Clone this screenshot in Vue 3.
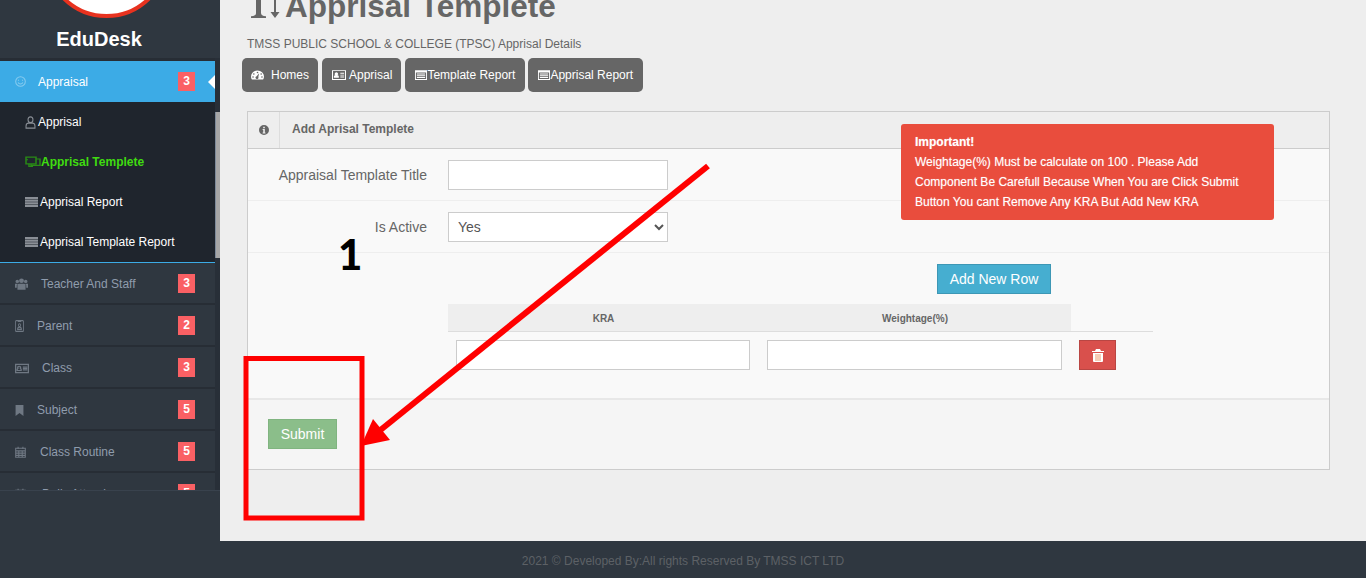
<template>
  <div class="page">
    <aside class="sidebar">
      <div class="brand">
        <div class="brand__logo"></div>
        <div class="brand__name">EduDesk</div>
      </div>
      <div class="sidebar__body">
        <nav class="menu">
          <a class="menu__item menu__item--active">
            <span class="menu__icon" :style="{ width: '23px' }">
              <svg class="ico ico--line" viewBox="0 0 16 16" width="11" height="11"><path :d="icons.smile" /></svg>
            </span>
            <span>Appraisal</span>
            <span class="badge">3</span>
            <span class="menu__caret"></span>
          </a>
          <div class="submenu">
            <a
              v-for="sub in subItems"
              :key="sub.label"
              class="submenu__item"
              :class="{ 'submenu__item--current': sub.current }"
            >
              <span class="menu__icon" :style="{ width: sub.iconBox + 'px' }">
                <svg
                  class="ico"
                  :class="sub.line ? 'ico--line' : 'ico--fill'"
                  viewBox="0 0 16 16"
                  :width="sub.w"
                  :height="sub.h"
                  preserveAspectRatio="none"
                ><path :d="icons[sub.icon]" /></svg>
              </span>
              <span>{{ sub.label }}</span>
            </a>
          </div>
          <a v-for="item in items" :key="item.label" class="menu__item">
            <span class="menu__icon" :style="{ width: item.iconBox + 'px' }">
              <svg
                class="ico"
                :class="item.line ? 'ico--line' : 'ico--fill'"
                viewBox="0 0 16 16"
                :width="item.w"
                :height="item.h"
                preserveAspectRatio="none"
              ><path :d="icons[item.icon]" /></svg>
            </span>
            <span>{{ item.label }}</span>
            <span class="badge">{{ item.badge }}</span>
          </a>
        </nav>
        <div class="scrolltrack"><div class="scrolltrack__thumb"></div></div>
      </div>
      <div class="sidebar__foot"></div>
    </aside>

    <div class="main">
      <div class="content">
        <h1 class="title">
          <svg class="title__icon" viewBox="0 0 32 24" width="32" height="24">
            <path d="M7 0h5v19c0 2 1.500 3 5 3.200V24H2v-1.800c3.500-.2 5-1.200 5-3.200z" />
            <path d="M25 4h2v14h3.500L26 24l-4.500-6H25z" />
          </svg>
          <span>Apprisal Templete</span>
        </h1>
        <p class="subtitle">TMSS PUBLIC SCHOOL &amp; COLLEGE (TPSC) Apprisal Details</p>
        <div class="quick">
          <a v-for="btn in quickLinks" :key="btn.label" class="quick__btn">
            <svg class="ico ico--white" :style="{ marginRight: btn.gap + 'px' }" viewBox="0 0 16 16" :width="btn.w" height="12" preserveAspectRatio="none"><path :d="icons[btn.icon]" /></svg>
            <span>{{ btn.label }}</span>
          </a>
        </div>

        <section class="panel">
          <header class="panel__head">
            <span class="panel__icon">
              <svg class="ico ico--info" viewBox="0 0 16 16" width="10" height="10"><path :d="icons.info" /></svg>
            </span>
            <span class="panel__title">Add Aprisal Templete</span>
          </header>
          <div class="form-row">
            <label class="form-row__label">Appraisal Template Title</label>
            <input class="control" type="text" />
          </div>
          <div class="form-row">
            <label class="form-row__label">Is Active</label>
            <select class="control control--select">
              <option>Yes</option>
              <option>No</option>
            </select>
          </div>
          <div class="kra">
            <div class="kra__actions">
              <button class="btn btn--info" type="button">Add New Row</button>
            </div>
            <div class="kra__table">
              <div class="kra__th">KRA</div>
              <div class="kra__th">Weightage(%)</div>
              <div class="kra__blank"></div>
              <div class="kra__td"><input class="control control--full" type="text" /></div>
              <div class="kra__td"><input class="control control--full" type="text" /></div>
              <div class="kra__td kra__td--last">
                <button class="btn btn--danger" type="button" aria-label="Remove">
                  <svg viewBox="0 0 12 13" width="12" height="13">
                    <path fill="#fff" d="M4 0h4l1 2h3v1H0V2h3zM1 4h10v8a1 1 0 0 1-1 1H2a1 1 0 0 1-1-1z" />
                    <path fill="#f6cdb6" d="M3 5h6v7H3z" />
                  </svg>
                </button>
              </div>
            </div>
          </div>
          <div class="panel__foot">
            <button class="btn btn--success" type="button">Submit</button>
          </div>
        </section>
      </div>
      <footer class="footer">2021 © Developed By:All rights Reserved By TMSS ICT LTD</footer>
    </div>

    <div class="notice">
      <strong>Important!</strong><br />
      Weightage(%) Must be calculate on 100 . Please Add<br />
      Component Be Carefull Because When You are Click Submit<br />
      Button You cant Remove Any KRA But Add New KRA
    </div>

    <div class="step">1</div>

    <svg class="markup" viewBox="0 0 1366 578" width="1366" height="578">
      <rect x="246" y="358.500" width="116" height="159.500" fill="none" stroke="#ff0000" stroke-width="5" />
      <path d="M708 166 L378 432" stroke="#ff0000" stroke-width="6" fill="none" />
      <path d="M361 446 L373 419 L390 440 Z" fill="#ff0000" />
    </svg>
  </div>
</template>

<script setup>
const icons = {
  smile: 'M8 1a7 7 0 1 0 0 14a7 7 0 1 0 0-14z M5 5.500v1.500 M11 5.500v1.500 M4.500 9.500c1.500 3 5.500 3 7 0',
  user: 'M8 1a3.600 3.600 0 1 0 0 7.200a3.600 3.600 0 1 0 0-7.200z M1.500 15v-2.500c0-2 1.500-3.600 3.500-3.600h6c2 0 3.500 1.600 3.500 3.600V15z',
  screens: 'M1 1.500h10v9H1z M11 4h4v8.500H6v-2 M4 10.500v3.500h4 M1 5h2',
  list: 'M0 0h16v3.500H0z M0 4.200h16v3.500H0z M0 8.400h16v3.500H0z M0 12.600h16V16H0z',
  users: 'M8 .5a3 3 0 1 0 0 6a3 3 0 1 0 0-6z M2.800 2.300a2.200 2.200 0 1 0 0 4.400a2.200 2.200 0 1 0 0-4.400z M13.200 2.300a2.200 2.200 0 1 0 0 4.400a2.200 2.200 0 1 0 0-4.400z M4.500 7.500h7c1 0 1.500 1 1.500 2v6H3v-6c0-1 .5-2 1.500-2z M0 7.500h3.400L2.200 9.800V13H0z M16 7.500h-3.400l1.200 2.300V13H16z',
  portrait: 'M2 .8h12a1 1 0 0 1 1 1v12.400a1 1 0 0 1-1 1H2a1 1 0 0 1-1-1V1.800a1 1 0 0 1 1-1z M5 1.800h6 M8 5a1.900 1.900 0 1 0 0 3.800a1.900 1.900 0 1 0 0-3.800z M4.500 12.500c0-4 7-4 7 0z',
  idcard: 'M.7 2h14.600v12H.7z M2.500 11V9.500c0-1.500 1-1.800 1.500-1.800a1.600 1.600 0 1 1 1.500 0c.5 0 1.500.3 1.500 1.800V11z M9 6h5 M9 8h5 M9 10h5',
  bookmark: 'M1 0h14v16l-7-4.500L1 16z',
  calendar: 'M1 3h14v12H1z M1 6.500h14 M1 9.500h14 M1 12.500h14 M5.500 6.500V15 M10.500 6.500V15 M4.500 1v3 M11.500 1v3',
  gauge: 'M8 2a8 8 0 0 0-8 8c0 1.500.4 3 1.100 4h13.800c.7-1 1.100-2.500 1.100-4a8 8 0 0 0-8-8z M8 3.500a1 1 0 1 0 0 2a1 1 0 1 0 0-2z M3.500 5.500a1 1 0 1 0 0 2a1 1 0 1 0 0-2z M12.500 5.500a1 1 0 1 0 0 2a1 1 0 1 0 0-2z M2.500 9.500a1 1 0 1 0 0 2a1 1 0 1 0 0-2z M13.500 9.500a1 1 0 1 0 0 2a1 1 0 1 0 0-2z M10 5.500L7 9.800a1.800 1.800 0 1 0 2 1z',
  card: 'M0 1.500h16v13H0z M1.200 2.800v10.400h13.600V2.800z M2.200 11.500v-1.800c0-1 .9-1.400 1.800-1.500a2 2 0 1 1 2 0c.9.100 1.800.5 1.800 1.500v1.800z M9.500 5h4.300v1.200H9.500z M9.500 7.500h4.300v1.200H9.500z M9.500 10h4.300v1.200H9.500z',
  listalt: 'M0 1.500h16v13H0z M1.200 4.500v8.700h13.600V4.500z M2.500 6h11v1.300h-11z M2.500 8.300h11v1.300h-11z M2.500 10.600h11v1.300h-11z',
  info: 'M8 0a8 8 0 1 0 0 16A8 8 0 0 0 8 0z M6.700 2.800h2.600v2.400H6.700z M5.800 6.500h3.500v5.500h1v1.500H5.800V12h1V8h-1z',
}

const subItems = [
  { label: 'Apprisal', icon: 'user', line: true, iconBox: 13, w: 11, h: 13 },
  { label: 'Apprisal Templete', icon: 'screens', line: true, iconBox: 16, w: 16, h: 12, current: true },
  { label: 'Apprisal Report', icon: 'list', iconBox: 15, w: 13, h: 10 },
  { label: 'Apprisal Template Report', icon: 'list', iconBox: 15, w: 13, h: 10 },
]

const items = [
  { label: 'Teacher And Staff', icon: 'users', iconBox: 26, w: 13, h: 12, badge: 3 },
  { label: 'Parent', icon: 'portrait', line: true, iconBox: 22, w: 9, h: 12, badge: 2 },
  { label: 'Class', icon: 'idcard', line: true, iconBox: 27, w: 14, h: 11, badge: 3 },
  { label: 'Subject', icon: 'bookmark', iconBox: 22, w: 9, h: 11, badge: 5 },
  { label: 'Class Routine', icon: 'calendar', line: true, iconBox: 25, w: 11, h: 12, badge: 5 },
  { label: 'Daily Attendance', icon: 'calendar', line: true, iconBox: 27, w: 11, h: 12, badge: 5 },
]

const quickLinks = [
  { label: 'Homes', icon: 'gauge', w: 13, gap: 7 },
  { label: 'Apprisal', icon: 'card', w: 14, gap: 3 },
  { label: 'Template Report', icon: 'listalt', w: 12, gap: 0 },
  { label: 'Apprisal Report', icon: 'listalt', w: 12, gap: 0 },
]
</script>

<style scoped>
.page {
  position: relative;
  display: flex;
  width: 1366px;
  height: 578px;
  overflow: hidden;
  background: #eeeeee;
  font-family: "Liberation Sans", Arial, sans-serif;
  font-size: 12px;
  color: #666666;
}

.sidebar {
  flex: 0 0 220px;
  display: flex;
  flex-direction: column;
  background: #2f3740;
}

.brand {
  height: 58px;
  overflow: hidden;
  text-align: center;
}

.brand__logo {
  width: 125px;
  height: 125px;
  margin: -107px 0 0 44px;
  box-sizing: border-box;
  border-radius: 50%;
  background: #ffffff;
  border: 4px solid #e8321f;
}

.brand__name {
  margin: 9px 0 0 -22px;
  color: #ffffff;
  font-size: 20px;
  font-weight: 700;
  line-height: 24px;
}

.sidebar__body {
  display: flex;
  height: 432px;
}

.menu {
  flex: 0 0 215px;
  overflow: hidden;
  border-top: 3px solid #272d35;
  box-sizing: border-box;
}

.menu__item {
  display: flex;
  align-items: center;
  height: 42px;
  box-sizing: border-box;
  padding: 2px 0 0 15px;
  border-bottom: 2px solid #272d35;
  color: #8f9cad;
  position: relative;
}

.menu__item--active {
  height: 41px;
  padding-top: 0;
  border-bottom: 0;
  background: #3cabe6;
  color: #ffffff;
}

.menu__icon {
  flex: none;
  display: flex;
  align-items: center;
}

.badge {
  position: absolute;
  left: 178px;
  top: 11px;
  width: 17px;
  height: 19px;
  background: #fa6064;
  color: #ffffff;
  font-weight: 700;
  line-height: 19px;
  text-align: center;
}

.menu__caret {
  position: absolute;
  right: 0;
  top: 14px;
  border-style: solid;
  border-width: 7px 7px 7px 0;
  border-color: transparent #ffffff transparent transparent;
}

.submenu {
  border-bottom: 1px solid #3cabe6;
  background: #1f252d;
}

.submenu__item {
  display: flex;
  align-items: center;
  height: 40px;
  padding-left: 25px;
  color: #ffffff;
}

.submenu__item--current {
  color: #3fdc10;
  font-weight: 700;
}

.submenu__item--current .ico--line {
  stroke: #2a8a16;
}

.ico--line {
  fill: none;
  stroke: currentColor;
  stroke-width: 1.500;
}

.ico--fill {
  fill: currentColor;
  fill-rule: evenodd;
}

.ico--white {
  fill: #ffffff;
  fill-rule: evenodd;
}

.ico--info {
  fill: #666666;
  fill-rule: evenodd;
}

.menu__item--active .ico--line {
  stroke: #86cbef;
}

.menu__item:not(.menu__item--active) .ico {
  color: #6f7883;
}

.submenu__item .ico {
  color: #8a8f96;
}

.scrolltrack {
  flex: 0 0 5px;
  background: #282f38;
}

.scrolltrack__thumb {
  height: 146px;
  margin-top: 54px;
  box-sizing: border-box;
  background: #a6a6a6;
  border-left: 1px solid #7d8a9a;
}

.sidebar__foot {
  flex: 1;
  border-top: 1px solid #39424d;
}

.main {
  flex: 1;
  display: flex;
  flex-direction: column;
  min-width: 0;
}

.content {
  flex: 1;
  padding: 0 36px 0 27px;
}

.title {
  display: flex;
  align-items: center;
  gap: 4px;
  height: 34px;
  margin: -11px 0 0;
  padding-left: 2px;
  font-size: 31.500px;
  font-weight: 700;
  line-height: 34px;
  color: #666666;
}

.title__icon {
  fill: #666666;
}

.subtitle {
  margin: 14px 0 0;
  line-height: 14px;
  font-size: 12px;
}

.quick {
  display: flex;
  gap: 4px;
  margin: 7px 0 0 -5px;
}

.quick__btn {
  display: flex;
  align-items: center;
  height: 34px;
  padding: 0 10px;
  background: #666666;
  border-radius: 5px;
  color: #ffffff;
}

.quick__btn:first-child {
  padding: 0 9px;
}

.quick__btn:nth-child(2) {
  padding-right: 9px;
}

.quick__btn:last-child {
  margin-left: -1px;
}

.panel {
  margin-top: 19px;
  border: 1px solid #cccccc;
  background: #f9f9f9;
}

.panel__head {
  display: flex;
  height: 36px;
  border-bottom: 1px solid #cccccc;
  background: #eeeeee;
}

.panel__icon {
  flex: 0 0 31px;
  display: flex;
  align-items: center;
  justify-content: center;
  border-right: 1px solid #dddddd;
}

.panel__title {
  padding-left: 12px;
  font-weight: 700;
  line-height: 34px;
}

.form-row {
  display: flex;
  padding: 11px 0 10px;
  border-bottom: 1px solid #eeeeee;
}

.form-row__label {
  width: 179px;
  margin-right: 21px;
  text-align: right;
  font-size: 14px;
  line-height: 30px;
  color: #666666;
}

.control {
  width: 220px;
  height: 30px;
  box-sizing: border-box;
  border: 1px solid #cccccc;
  background: #ffffff;
  padding: 0 10px;
  font-family: inherit;
  font-size: 14px;
  color: #555555;
  outline: none;
}

.control--select {
  padding-left: 5px;
}

.control--full {
  display: block;
  width: 100%;
}

.kra {
  height: 147px;
  box-sizing: border-box;
  padding-top: 11px;
  border-bottom: 2px solid #e8e8e8;
}

.kra__actions {
  display: flex;
  justify-content: flex-end;
  width: 803px;
}

.btn {
  height: 30px;
  box-sizing: border-box;
  border: 1px solid transparent;
  font-family: inherit;
  font-size: 14px;
  color: #ffffff;
  padding: 0;
}

.btn--info {
  width: 114px;
  background: #46aed0;
  border-color: #3d97b5;
}

.btn--danger {
  display: flex;
  align-items: center;
  justify-content: center;
  width: 37px;
  background: #d9504c;
  border-color: #b94643;
}

.btn--success {
  width: 69px;
  background: #8bbe8a;
  border-color: #80b480;
}

.kra__table {
  display: grid;
  grid-template-columns: 311px 312px 82px;
  width: 705px;
  margin: 10px 0 0 200px;
}

.kra__th {
  height: 27px;
  background: #eeeeee;
  border-bottom: 1px solid #dddddd;
  font-size: 10px;
  font-weight: 700;
  line-height: 30px;
  text-align: center;
}

.kra__blank {
  border-bottom: 1px solid #dddddd;
}

.kra__td {
  padding: 8px 9px 0 8px;
}

.kra__td--last {
  padding-right: 0;
}

.panel__foot {
  height: 69px;
  box-sizing: border-box;
  padding: 19px 20px;
  background: #f5f5f5;
}

.footer {
  flex: 0 0 37px;
  box-sizing: border-box;
  margin-left: -220px;
  padding-top: 3px;
  background: #2f3740;
  color: #5d6166;
  line-height: 34px;
  text-align: center;
}

.notice {
  position: absolute;
  left: 901px;
  top: 124px;
  width: 373px;
  height: 96px;
  box-sizing: border-box;
  padding: 8px 14px;
  border-radius: 3px;
  background: #e94d3d;
  color: #ffffff;
  line-height: 20px;
  text-shadow: 0 0 1px rgba(255, 255, 255, 0.45);
}

.step {
  position: absolute;
  left: 338px;
  top: 229px;
  color: #000000;
  font-family: Lato, sans-serif;
  font-size: 42px;
  font-weight: 900;
  line-height: 50px;
}

.markup {
  position: absolute;
  left: 0;
  top: 0;
  pointer-events: none;
}
</style>
